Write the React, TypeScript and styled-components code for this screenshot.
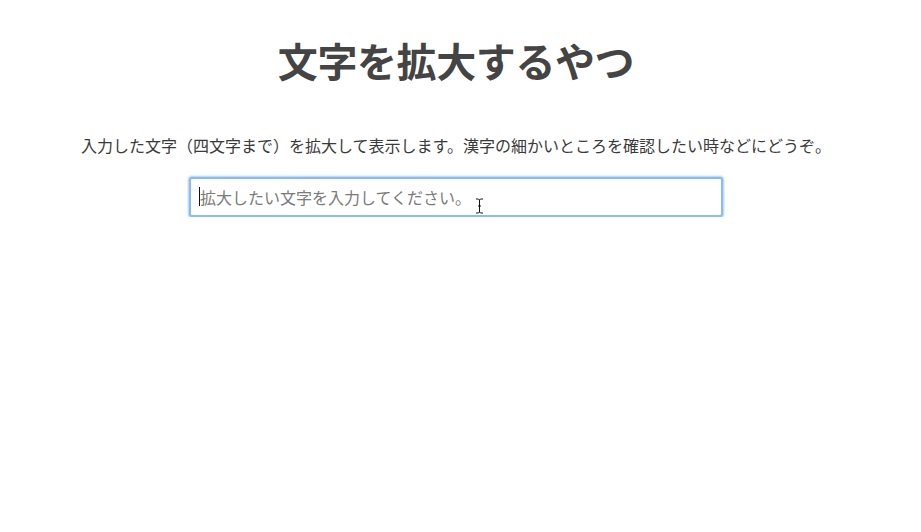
import React from 'react'
import styled, { createGlobalStyle } from 'styled-components'

const GlobalStyle = createGlobalStyle`
  html, body {
    margin: 0;
    padding: 0;
    background: #ffffff;
  }
  body {
    font-family: "Noto Sans CJK JP", "Noto Sans", sans-serif;
  }
`

const Page = styled.main`
  display: flex;
  flex-direction: column;
  align-items: center;
  padding: 34px 9px 0 0;
`

const Title = styled.h1`
  margin: 0;
  font-size: 40px;
  line-height: 52px;
  font-weight: 700;
  color: #444444;
  letter-spacing: -0.4px;
`

const Lead = styled.p`
  margin: 47px 0 0;
  font-size: 16px;
  line-height: 24px;
  color: #3a3a3a;
  letter-spacing: 0;
`

const Field = styled.div`
  position: relative;
  margin-top: 20px;
`

const TextInput = styled.input`
  box-sizing: border-box;
  width: 534px;
  height: 40px;
  padding: 0 9px;
  border: 2px solid #8cbaf5;
  border-radius: 3px;
  box-shadow: 0 0 2px 1px #a9cdfa;
  outline: none;
  font-family: inherit;
  font-size: 16px;
  color: #333;
  caret-color: #000;

  &::placeholder {
    color: #7a7a7a;
  }
`

const Caret = styled.span`
  position: absolute;
  left: 10px;
  top: 10px;
  width: 1px;
  height: 19px;
  background: #111;
`

const Pointer = styled.svg`
  position: absolute;
  left: 286px;
  top: 21px;
  width: 9px;
  height: 16px;
`

export default function App() {
  return (
    <>
      <GlobalStyle />
      <Page>
        <Title>文字を拡大するやつ</Title>
        <Lead>入力した文字（四文字まで）を拡大して表示します。漢字の細かいところを確認したい時などにどうぞ。</Lead>
        <Field>
          <TextInput type="text" placeholder="拡大したい文字を入力してください。" />
          <Caret />
          <Pointer viewBox="0 0 9 16">
            <path d="M1 1h2.5l1 1 1-1H8M4.5 2v12M1 15h2.5l1-1 1 1H8M3 8h3" fill="none" stroke="#fff" strokeWidth="2.4" />
            <path d="M1 1h2.5l1 1 1-1H8M4.5 2v12M1 15h2.5l1-1 1 1H8M3 8h3" fill="none" stroke="#111" strokeWidth="1" />
          </Pointer>
        </Field>
      </Page>
    </>
  )
}
